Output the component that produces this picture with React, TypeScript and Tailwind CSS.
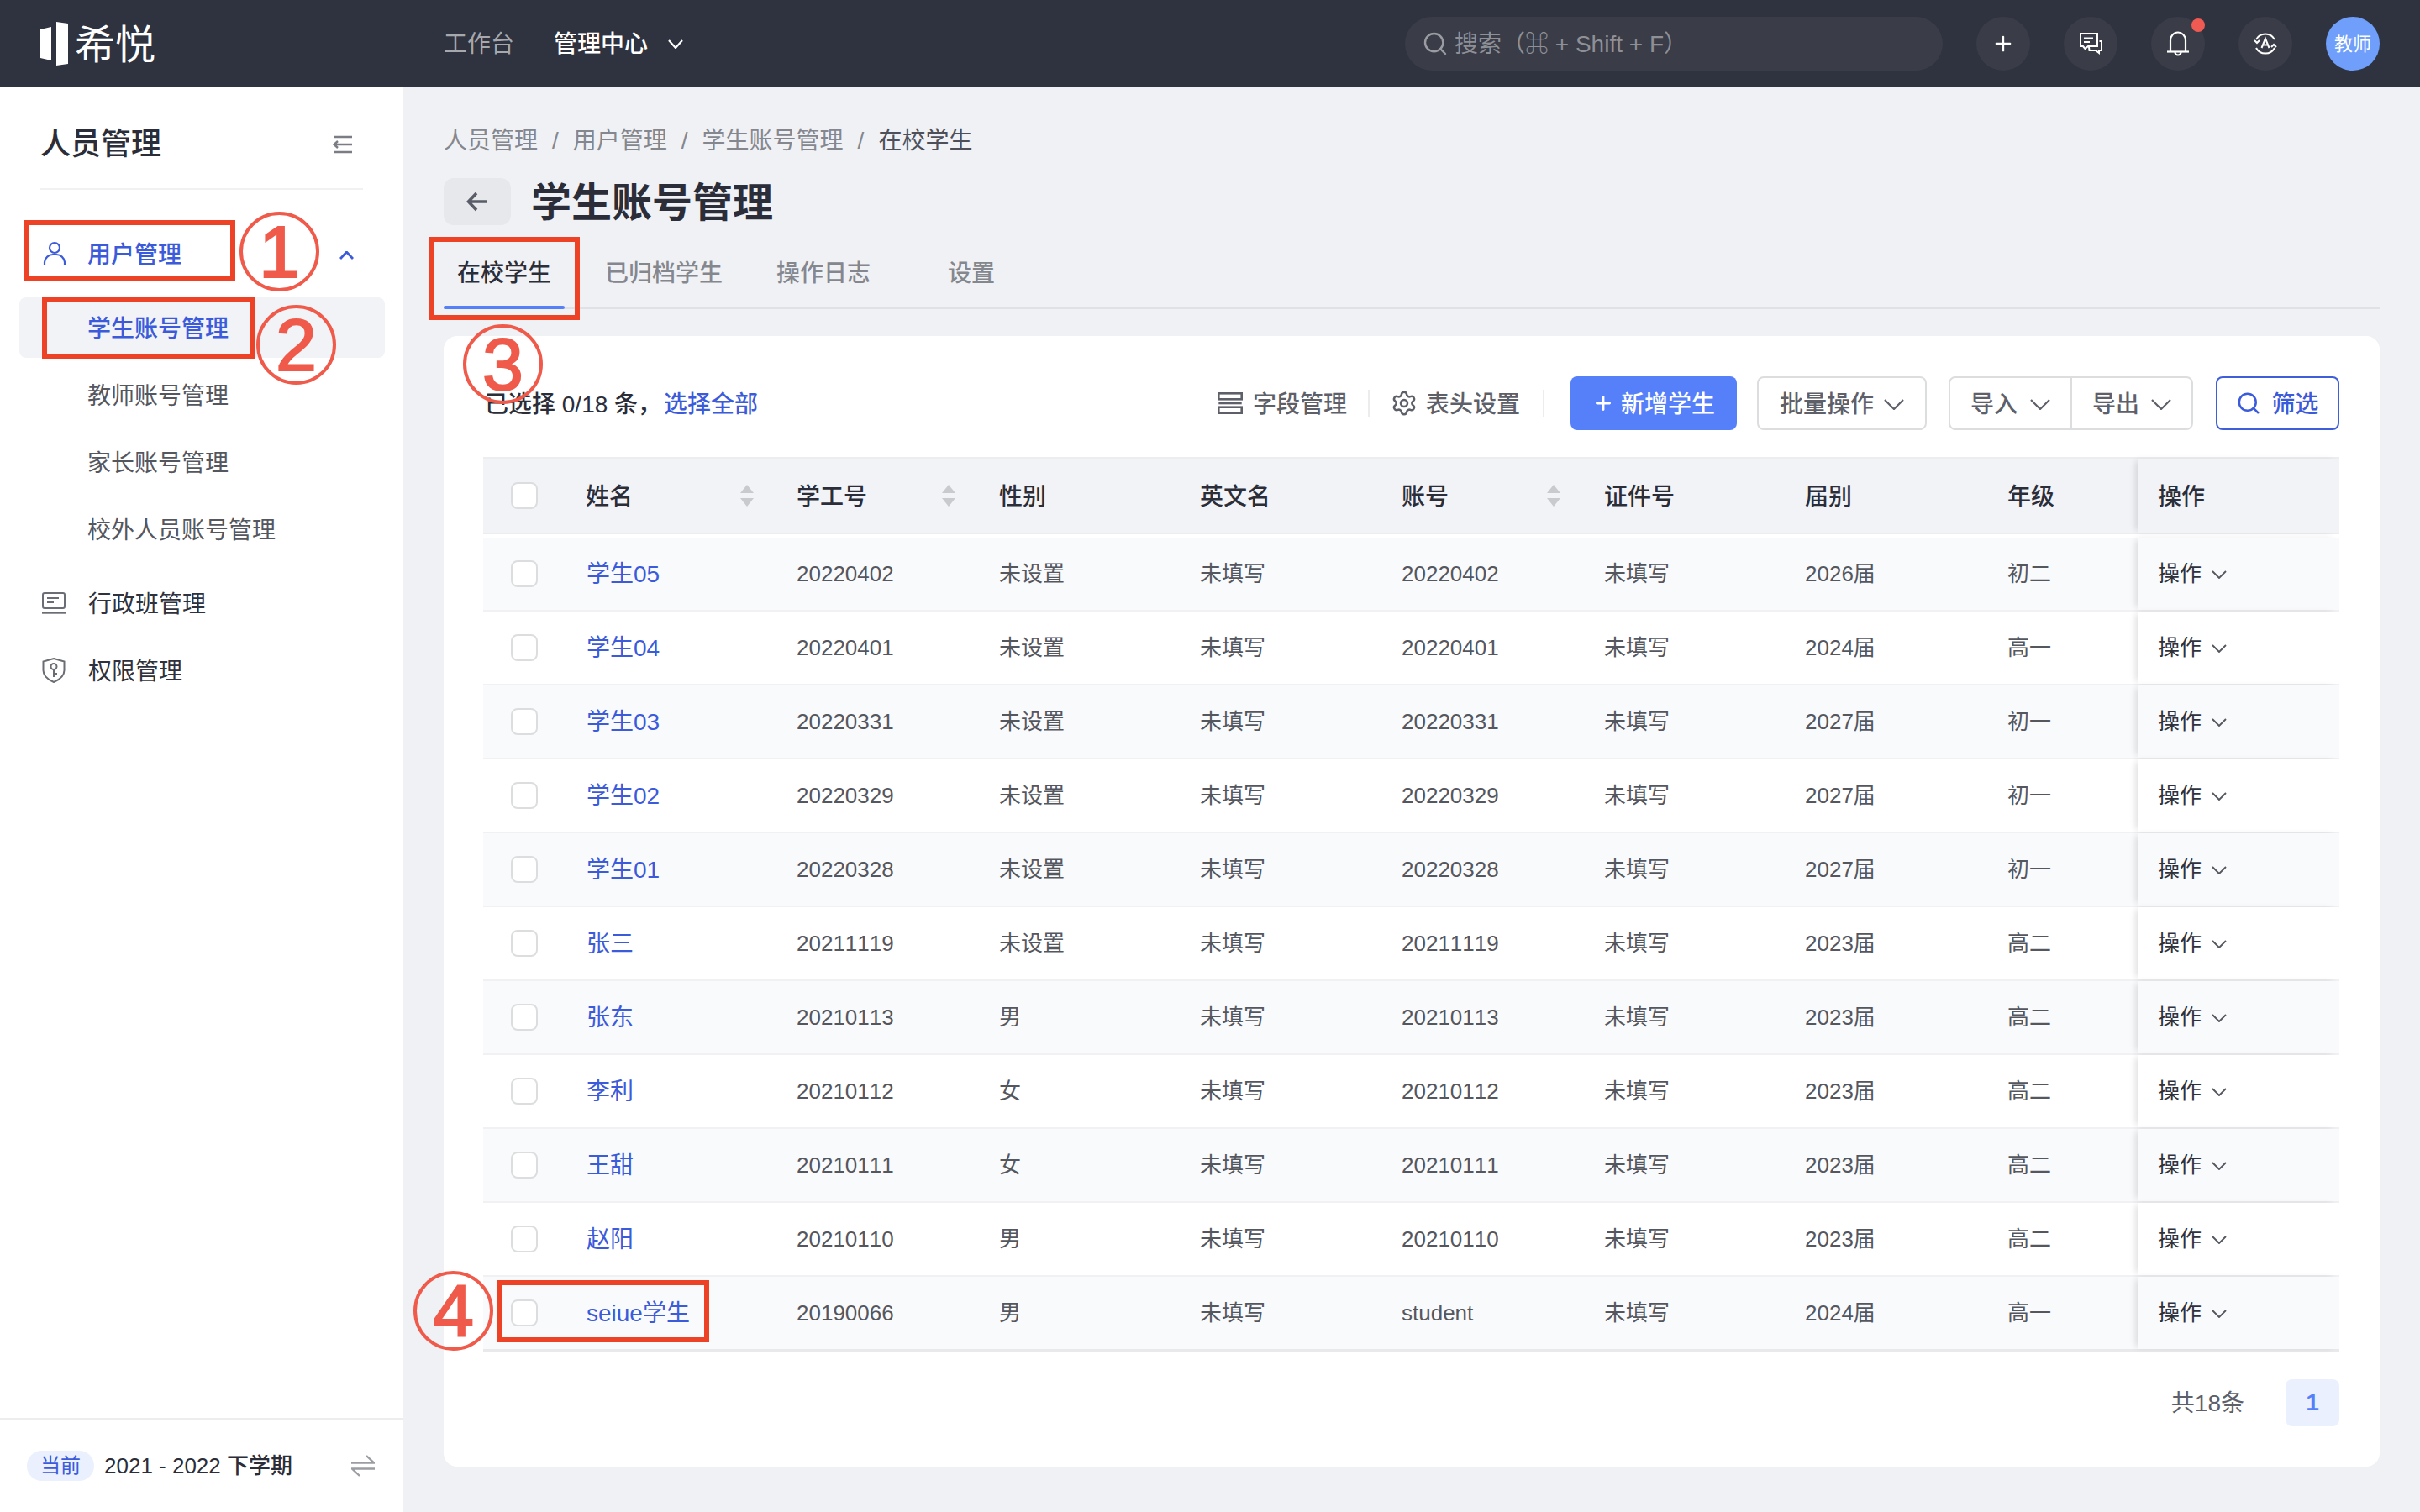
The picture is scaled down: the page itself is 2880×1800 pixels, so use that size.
import React from "react";
import { Search, Plus, Settings } from "lucide-react";

const FONT = '"Liberation Sans","Noto Sans CJK SC",sans-serif';

type Row = { name: string; id: string; sex: string; acc?: string; grad: string; grade: string };
const rows: Row[] = [
  { name: "学生05", id: "20220402", sex: "未设置", grad: "2026届", grade: "初二" },
  { name: "学生04", id: "20220401", sex: "未设置", grad: "2024届", grade: "高一" },
  { name: "学生03", id: "20220331", sex: "未设置", grad: "2027届", grade: "初一" },
  { name: "学生02", id: "20220329", sex: "未设置", grad: "2027届", grade: "初一" },
  { name: "学生01", id: "20220328", sex: "未设置", grad: "2027届", grade: "初一" },
  { name: "张三", id: "20211119", sex: "未设置", grad: "2023届", grade: "高二" },
  { name: "张东", id: "20210113", sex: "男", grad: "2023届", grade: "高二" },
  { name: "李利", id: "20210112", sex: "女", grad: "2023届", grade: "高二" },
  { name: "王甜", id: "20210111", sex: "女", grad: "2023届", grade: "高二" },
  { name: "赵阳", id: "20210110", sex: "男", grad: "2023届", grade: "高二" },
  { name: "seiue学生", id: "20190066", sex: "男", acc: "student", grad: "2024届", grade: "高一" },
];

const GRID = "grid grid-cols-[98px_251px_241px_239px_240px_241px_239px_241px_179px_240px] items-center";

function Chev({ w, h, sw = 2.2, up, className }: { w: number; h: number; sw?: number; up?: boolean; className?: string }) {
  return (
    <svg width={w} height={h} viewBox={`0 0 ${w} ${h}`} fill="none" stroke="currentColor" strokeWidth={sw} className={`shrink-0 ${className ?? ""}`}>
      <path d={up ? `M1 ${h - 1} L${w / 2} 1 L${w - 1} ${h - 1}` : `M1 1 L${w / 2} ${h - 1} L${w - 1} 1`} />
    </svg>
  );
}

function SortIcon() {
  return (
    <svg width="16" height="26" viewBox="0 0 16 26" className="shrink-0">
      <path d="M8 0 L16 10 H0 Z" fill="#c9cace" />
      <path d="M8 26 L16 16 H0 Z" fill="#c9cace" />
    </svg>
  );
}

function Check() {
  return <div className="ml-[33px] h-[32px] w-[32px] rounded-[8px] border-2 border-[#dcdddf] bg-white" />;
}

function HeadCell({ label, sort, pr }: { label: string; sort?: boolean; pr?: string }) {
  return (
    <div className={`flex items-center justify-between pl-[24px] text-[28px] font-medium text-[#2b2e39] ${pr ?? ""}`}>
      <span className="pt-[3px]">{label}</span>
      {sort && <SortIcon />}
    </div>
  );
}

function TopIconBtn({ children, dot }: { children: React.ReactNode; dot?: boolean }) {
  return (
    <div className="relative flex h-[64px] w-[64px] items-center justify-center rounded-full bg-[#3a3c48]">
      {children}
      {dot && <span className="absolute right-0 top-[2px] h-[16px] w-[16px] rounded-full bg-[#ef5a52]" />}
    </div>
  );
}

function Circled({ n, cls }: { n: string; cls: string }) {
  return (
    <div
      className={`absolute flex h-[95px] w-[95px] items-center justify-center rounded-full border-[4px] border-[#ef5a4a] text-[88px] leading-none text-[#ef5a4a] [-webkit-text-stroke:2px_#ef5a4a] ${cls}`}
    >
      {n}
    </div>
  );
}

function RedBox({ cls }: { cls: string }) {
  return <div className={`absolute border-[6px] border-[#ee4226] ${cls}`} />;
}

function SubItem({ label, active }: { label: string; active?: boolean }) {
  return (
    <div
      className={`flex h-[72px] items-center rounded-[8px] pl-[81px] pt-[3px] text-[28px] ${
        active ? "bg-[#f2f3f7] font-medium text-[#3b5bdb]" : "text-[#55575f]"
      }`}
    >
      {label}
    </div>
  );
}

export default function App() {
  return (
    <div className="relative flex h-[1800px] w-[2880px] flex-col overflow-hidden bg-[#f0f1f5] [font-kerning:none]" style={{ fontFamily: FONT }}>
      {/* top bar */}
      <header className="flex h-[104px] shrink-0 items-center bg-[#2f333f]">
        <div className="ml-[48px] flex w-[480px] items-center">
          <svg width="34" height="52" viewBox="0 0 34 52" className="shrink-0">
            <path d="M0 9 L13 6 V46 L0 43 Z" fill="#fff" />
            <path d="M19 0 L33 2 V50 L19 52 Z" fill="#fff" />
          </svg>
          <span className="ml-[7px] pt-[3px] text-[48px] font-normal leading-none text-white">希悦</span>
        </div>
        <span className="pt-[2px] text-[28px] text-[#a6a8ae]">工作台</span>
        <span className="ml-[47px] pt-[2px] text-[28px] font-medium text-white">管理中心</span>
        <Chev w={18} h={11} className="ml-[24px] text-white" />
        <div className="ml-[859px] flex h-[64px] w-[640px] items-center rounded-full bg-[#3a3c48] pl-[20px] text-[28px] text-[#8e9096]">
          <Search size={32} strokeWidth={1.8} className="text-[#9a9ca2]" />
          <span className="ml-[7px] pt-[2px]">搜索（⌘ + Shift + F）</span>
        </div>
        <div className="ml-[40px] flex items-center gap-[40px]">
          <TopIconBtn>
            <Plus size={28} strokeWidth={2} className="text-white" />
          </TopIconBtn>
          <TopIconBtn>
            <svg width="28" height="28" viewBox="0 0 28 28" fill="none" stroke="#fff" strokeWidth="2">
              <path d="M2 2 H22 V17 H11 L7.5 20 L5 17 H2 Z" />
              <path d="M6 7.5 H17 M6 12 H13" />
              <path d="M24.5 11 H27 V22 H24 V25 L20 22 H12.5 L12 18" />
            </svg>
          </TopIconBtn>
          <TopIconBtn dot>
            <svg width="28" height="32" viewBox="0 0 28 32" fill="none" stroke="#fff" strokeWidth="2.2">
              <path d="M5 25 V12 a9 9.5 0 0 1 18 0 V25" />
              <path d="M1 25.5 H27" />
              <path d="M10.5 26 a3.5 3.5 0 0 0 7 0" />
            </svg>
          </TopIconBtn>
          <TopIconBtn>
            <svg width="28" height="28" viewBox="0 0 28 28" fill="none" stroke="#fff" strokeWidth="2">
              <path d="M3 9 A12.5 12.5 0 0 1 25 9" />
              <path d="M25 19 A12.5 12.5 0 0 1 3 19" />
              <path d="M1 10 L4 13 L7 10 M21 18 L24 15 L27 18" />
              <path d="M9.5 19 L14 8 L18.5 19 M11 15.5 H17" />
            </svg>
          </TopIconBtn>
          <div className="flex h-[64px] w-[64px] items-center justify-center rounded-full bg-[#6f9ffb] text-[22px] text-white">教师</div>
        </div>
      </header>

      <div className="flex min-h-0 flex-1">
        {/* sidebar */}
        <aside className="flex w-[480px] shrink-0 flex-col bg-white">
          <div className="mx-[48px] flex h-[122px] shrink-0 items-center justify-between border-b-2 border-[#f1f1f3] pt-[16px]">
            <span className="text-[36px] font-medium text-[#2b2e39]">人员管理</span>
            <svg width="24" height="22" viewBox="0 0 24 22" fill="none" stroke="#7b7d85" strokeWidth="2.4" className="mr-[12px]">
              <path d="M1 2 H23 M8 11 H23 M1 20 H23" />
              <path d="M6 7 L1.5 11 L6 15 M2 11 H8" />
            </svg>
          </div>
          <nav className="ml-[23px] mt-[40px] w-[435px]">
            <div className="flex h-[72px] items-center pl-[28px] text-[28px] font-medium text-[#3b5bdb]">
              <svg width="28" height="30" viewBox="0 0 28 30" fill="none" stroke="#3b5bdb" strokeWidth="2.2">
                <circle cx="14" cy="8" r="6" />
                <path d="M2 29 V25 A10 10 0 0 1 12 16 H16 A10 10 0 0 1 26 25 V29" />
              </svg>
              <span className="ml-[25px] pt-[3px]">用户管理</span>
              <Chev w={17} h={10} sw={2.8} up className="ml-[188px] mt-[4px] text-[#3b5bdb]" />
            </div>
            <div className="mt-[16px] flex flex-col gap-[8px]">
              <SubItem label="学生账号管理" active />
              <SubItem label="教师账号管理" />
              <SubItem label="家长账号管理" />
              <SubItem label="校外人员账号管理" />
            </div>
            <div className="mt-[16px] flex flex-col gap-[8px] text-[28px] text-[#2f323c]">
              <div className="flex h-[72px] items-center pl-[27px]">
                <svg width="28" height="26" viewBox="0 0 28 26" fill="none" stroke="#6b6d75" strokeWidth="2">
                  <rect x="1" y="1" width="26" height="18" rx="2" />
                  <path d="M6 7 H20 M6 12 H14" />
                  <path d="M0 24.5 H28" strokeWidth="2.4" />
                </svg>
                <span className="ml-[27px] pt-[3px]">行政班管理</span>
              </div>
              <div className="flex h-[72px] items-center pl-[27px]">
                <svg width="28" height="30" viewBox="0 0 28 30" fill="none" stroke="#6b6d75" strokeWidth="2">
                  <path d="M14 1 L26.5 4.5 V15 C26.5 22 20 26.5 14 29 C8 26.5 1.5 22 1.5 15 V4.5 Z" />
                  <circle cx="14" cy="10.5" r="3.5" />
                  <path d="M14 14 V23 M14 19 H18" />
                </svg>
                <span className="ml-[27px] pt-[3px]">权限管理</span>
              </div>
            </div>
          </nav>
          <div className="mt-auto flex h-[112px] shrink-0 items-center border-t-2 border-[#ededef] pl-[32px]">
            <span className="flex h-[36px] w-[80px] items-center justify-center rounded-full bg-[#eaf0fe] text-[24px] text-[#3b5bdb]">当前</span>
            <span className="ml-[12px] text-[26px] font-medium text-[#2b2e39]">2021 - 2022 下学期</span>
            <svg width="28" height="26" viewBox="0 0 28 26" fill="none" stroke="#9b9da3" strokeWidth="2.4" className="ml-[70px]">
              <path d="M0 9.5 H27 L18 1" />
              <path d="M28 16.5 H1 L10 25" />
            </svg>
          </div>
        </aside>

        {/* main */}
        <main className="flex min-w-0 flex-1 flex-col px-[48px] pt-[42px]">
          <div className="flex h-[40px] items-center pt-[3px] text-[28px] text-[#85878e]">
            <span>人员管理</span>
            <span className="mx-[17px]">/</span>
            <span>用户管理</span>
            <span className="mx-[17px]">/</span>
            <span>学生账号管理</span>
            <span className="mx-[17px]">/</span>
            <span className="text-[#4d5059]">在校学生</span>
          </div>
          <div className="mt-[26px] flex h-[56px] items-center">
            <div className="flex h-[56px] w-[80px] items-center justify-center rounded-[12px] bg-[#e7e8ec]">
              <svg width="26" height="24" viewBox="0 0 26 24" fill="none" stroke="#5a5d68" strokeWidth="3.6">
                <path d="M12 2 L2.5 12 L12 22 M3 12 H25" />
              </svg>
            </div>
            <h1 className="ml-[24px] pt-[3px] text-[48px] font-semibold text-[#2b2e39]">学生账号管理</h1>
          </div>
          <div className="mt-[28px] flex h-[72px] shrink-0 gap-[32px] border-b-2 border-[#e0e1e6] text-[28px]">
            <div className="relative flex h-[72px] min-w-[144px] justify-center pt-[9px] font-medium text-[#2b2e39]">
              在校学生
              <span className="absolute bottom-0 left-0 h-[4px] w-[144px] rounded-full bg-[#5680fa]" />
            </div>
            <div className="flex h-[72px] min-w-[144px] justify-center px-[16px] pt-[9px] font-medium text-[#85878e]">已归档学生</div>
            <div className="flex h-[72px] min-w-[144px] justify-center pt-[9px] font-medium text-[#85878e]">操作日志</div>
            <div className="flex h-[72px] min-w-[144px] justify-center pt-[9px] font-medium text-[#85878e]">设置</div>
          </div>

          <section className="mt-[32px] h-[1346px] shrink-0 rounded-[16px] bg-white pl-[47px] pr-[48px] pt-[48px]">
            {/* toolbar */}
            <div className="flex h-[64px] items-center text-[28px]">
              <span className="ml-[2px] pt-[3px] font-medium text-[#2b2e39]">已选择 0/18 条，</span>
              <span className="ml-[3px] pt-[3px] font-medium text-[#3b5bdb]">选择全部</span>
              <div className="ml-auto flex items-center font-medium text-[#5e6069]">
                <svg width="30" height="26" viewBox="0 0 30 26" fill="none" stroke="#5e6069" strokeWidth="2.6">
                  <rect x="1.3" y="1.3" width="27.4" height="7" />
                  <path d="M1.3 13 H28.7" />
                  <rect x="1.3" y="17.7" width="27.4" height="7" />
                </svg>
                <span className="ml-[12px] pt-[3px]">字段管理</span>
                <span className="ml-[25px] h-[32px] w-[2px] bg-[#ececee]" />
                <Settings size={32} strokeWidth={1.9} className="ml-[25px] text-[#5e6069]" />
                <span className="ml-[10px] pt-[3px]">表头设置</span>
                <span className="ml-[27px] h-[32px] w-[2px] bg-[#ececee]" />
                <div className="ml-[31px] flex h-[64px] w-[198px] items-center justify-center rounded-[8px] bg-[#5680fa] font-medium text-white">
                  <Plus size={26} strokeWidth={2.6} />
                  <span className="ml-[8px] pt-[3px]">新增学生</span>
                </div>
                <div className="ml-[24px] flex h-[64px] w-[202px] items-center justify-center rounded-[8px] border-2 border-[#dcdddf] text-[#5e6069]">
                  <span className="pt-[3px]">批量操作</span>
                  <Chev w={24} h={13} sw={2.2} className="ml-[12px] mt-[2px]" />
                </div>
                <div className="ml-[26px] flex h-[64px] w-[291px] items-center rounded-[8px] border-2 border-[#dcdddf] text-[#5e6069]">
                  <div className="flex h-full w-[145px] items-center justify-center border-r-2 border-[#dcdddf]">
                    <span className="pt-[3px]">导入</span>
                    <Chev w={24} h={13} sw={2.2} className="ml-[15px] mt-[2px]" />
                  </div>
                  <div className="flex h-full flex-1 items-center justify-center">
                    <span className="pt-[3px]">导出</span>
                    <Chev w={24} h={13} sw={2.2} className="ml-[14px] mt-[2px]" />
                  </div>
                </div>
                <div className="ml-[27px] flex h-[64px] w-[147px] items-center justify-center rounded-[8px] border-2 border-[#3f5fd9] text-[#3b5bdb]">
                  <Search size={30} strokeWidth={2} />
                  <span className="ml-[12px] pt-[3px]">筛选</span>
                </div>
              </div>
            </div>

            {/* table */}
            <div className="mt-[32px] w-[2209px]">
              <div className={`${GRID} h-[92px] border-y-2 border-[#ecedef] bg-[#f2f3f7]`}>
                <div><Check /></div>
                <HeadCell label="姓名" sort pr="pr-[27px]" />
                <HeadCell label="学工号" sort pr="pr-[28px]" />
                <HeadCell label="性别" />
                <HeadCell label="英文名" />
                <HeadCell label="账号" sort pr="pr-[28px]" />
                <HeadCell label="证件号" />
                <HeadCell label="届别" />
                <HeadCell label="年级" />
                <div className="flex h-full items-center bg-[#f2f3f7] pl-[24px] pt-[3px] text-[28px] font-medium text-[#2b2e39] shadow-[-5px_0_8px_-3px_rgba(0,0,0,0.14)]">操作</div>
              </div>
              <div className="h-[4px] bg-white" />
              {rows.map((r, i) => {
                const bg = i % 2 === 0 ? "bg-[#f9fafc]" : "bg-white";
                const last = i === rows.length - 1;
                return (
                  <div
                    key={r.id}
                    className={`${GRID} ${bg} ${last ? "h-[89px] border-b-[3px] border-[#e9e9eb]" : "h-[88px] border-b-2 border-[#f1f1f3]"} text-[26px] text-[#55575f]`}
                  >
                    <div><Check /></div>
                    <div className="pl-[25px] pt-[2px] text-[28px] text-[#3b5bdb]">{r.name}</div>
                    <div className="pl-[24px]">{r.id}</div>
                    <div className="pl-[24px]">{r.sex}</div>
                    <div className="pl-[24px]">未填写</div>
                    <div className="pl-[24px]">{r.acc ?? r.id}</div>
                    <div className="pl-[24px]">未填写</div>
                    <div className="pl-[24px]">{r.grad}</div>
                    <div className="pl-[24px]">{r.grade}</div>
                    <div className={`${bg} flex h-full items-center pl-[24px] text-[#2f323c] shadow-[-5px_0_8px_-3px_rgba(0,0,0,0.14)]`}>
                      操作
                      <Chev w={18} h={10} sw={1.9} className="ml-[12px] mt-[2px] text-[#55575f]" />
                    </div>
                  </div>
                );
              })}
            </div>

            {/* pagination */}
            <div className="mt-[33px] flex w-[2209px] items-center justify-end">
              <span className="pt-[2px] text-[28px] text-[#5e6069]">共18条</span>
              <span className="ml-[49px] flex h-[56px] w-[64px] items-center justify-center rounded-[8px] bg-[#eaf0fe] text-[28px] font-bold text-[#5680fa]">1</span>
            </div>
          </section>
        </main>
      </div>

      {/* annotations laid over the page */}
      <RedBox cls="left-[28px] top-[262px] h-[73px] w-[252px]" />
      <Circled n="1" cls="left-[285px] top-[252px]" />
      <RedBox cls="left-[50px] top-[353px] h-[74px] w-[253px]" />
      <Circled n="2" cls="left-[305px] top-[363px]" />
      <RedBox cls="left-[511px] top-[282px] h-[99px] w-[179px]" />
      <Circled n="3" cls="left-[551px] top-[386px]" />
      <RedBox cls="left-[592px] top-[1524px] h-[74px] w-[252px]" />
      <Circled n="4" cls="left-[492px] top-[1513px]" />
    </div>
  );
}
